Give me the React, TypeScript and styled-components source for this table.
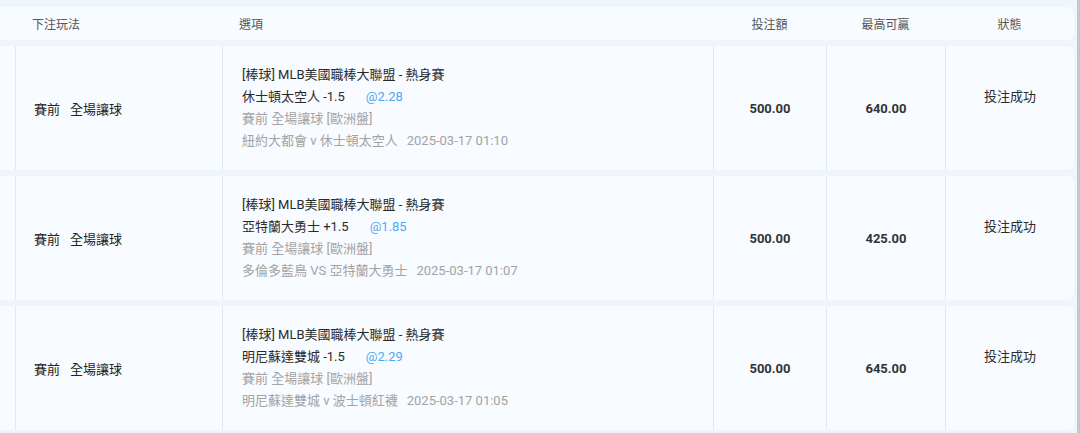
import React from "react";
import styled, { createGlobalStyle } from "styled-components";

const GlobalStyle = createGlobalStyle`
  html, body { margin: 0; padding: 0; }
  body {
    background: #eef5fd;
    font-family: Roboto, "Noto Sans CJK TC", "Noto Sans CJK SC", sans-serif;
    color: #333;
    overflow: hidden;
  }
`;

const COLS = "15px 207px 491px 113px 119px 129px";

const Page = styled.div`
  display: flex;
  width: 1080px;
  height: 433px;
  overflow: hidden;
`;

const Content = styled.div`
  flex: 1;
  padding: 7px 3px 0 0;
  display: flex;
  flex-direction: column;
  gap: 6px;
`;

const ScrollBar = styled.div`
  width: 3px;
  background: #c3c6cd;
`;

const HeaderRow = styled.div`
  display: grid;
  grid-template-columns: ${COLS};
  height: 33px;
  background: #f8fbff;
  border-radius: 0 7px 7px 0;
  align-items: center;
  font-size: 12px;
  color: #555;
`;

const HeadCell = styled.div<{ $align?: string }>`
  text-align: ${(p) => p.$align || "left"};
  padding-left: ${(p) => (p.$align === "center" ? "0" : "17px")};
`;

const Row = styled.div`
  display: grid;
  grid-template-columns: ${COLS};
  height: 124px;
  flex-shrink: 0;
  background: #f8fbff;
  border-radius: 0 7px 7px 0;
`;

const Cell = styled.div<{ $first?: boolean; $center?: boolean }>`
  border-left: ${(p) => (p.$first ? "none" : "1px solid #e2e8f0")};
  display: flex;
  align-items: center;
  justify-content: ${(p) => (p.$center ? "center" : "flex-start")};
  font-size: 13px;
`;

const PlayCell = styled(Cell)`
  padding-left: 18px;
  gap: 10px;
  color: #222;
`;

const OptionCell = styled(Cell)`
  padding-left: 19px;
`;

const OptionBlock = styled.div`
  display: flex;
  flex-direction: column;
  line-height: 22px;
  font-size: 13px;
`;

const Line = styled.div<{ $muted?: boolean }>`
  color: ${(p) => (p.$muted ? "#a3a3a3" : "#2a2a2a")};
  white-space: nowrap;
`;

const Odds = styled.span`
  color: #4fa8f3;
  margin-left: 21px;
`;

const Time = styled.span`
  margin-left: 9px;
`;

const Amount = styled(Cell)`
  font-weight: 700;
  color: #333;
`;

const StatusCell = styled(Cell)`
  align-items: flex-start;
  padding-top: 40px;
  line-height: 22px;
  color: #2a2a2a;
`;

type Bet = {
  team: string;
  odds: string;
  match: string;
  time: string;
  stake: string;
  win: string;
};

const bets: Bet[] = [
  {
    team: "休士頓太空人 -1.5",
    odds: "@2.28",
    match: "紐約大都會 v 休士頓太空人",
    time: "2025-03-17 01:10",
    stake: "500.00",
    win: "640.00",
  },
  {
    team: "亞特蘭大勇士 +1.5",
    odds: "@1.85",
    match: "多倫多藍鳥 VS 亞特蘭大勇士",
    time: "2025-03-17 01:07",
    stake: "500.00",
    win: "425.00",
  },
  {
    team: "明尼蘇達雙城 -1.5",
    odds: "@2.29",
    match: "明尼蘇達雙城 v 波士頓紅襪",
    time: "2025-03-17 01:05",
    stake: "500.00",
    win: "645.00",
  },
];

export default function App() {
  return (
    <>
      <GlobalStyle />
      <Page>
        <Content>
          <HeaderRow>
            <div />
            <HeadCell>下注玩法</HeadCell>
            <HeadCell>選項</HeadCell>
            <HeadCell $align="center">投注額</HeadCell>
            <HeadCell $align="center">最高可贏</HeadCell>
            <HeadCell $align="center">狀態</HeadCell>
          </HeaderRow>
          {bets.map((b, i) => (
            <Row key={i}>
              <Cell $first />
              <PlayCell>
                <span>賽前</span>
                <span>全場讓球</span>
              </PlayCell>
              <OptionCell>
                <OptionBlock>
                  <Line>[棒球] MLB美國職棒大聯盟 - 熱身賽</Line>
                  <Line>
                    {b.team}
                    <Odds>{b.odds}</Odds>
                  </Line>
                  <Line $muted>賽前 全場讓球 [歐洲盤]</Line>
                  <Line $muted>
                    {b.match}
                    <Time>{b.time}</Time>
                  </Line>
                </OptionBlock>
              </OptionCell>
              <Amount $center>{b.stake}</Amount>
              <Amount $center>{b.win}</Amount>
              <StatusCell $center>投注成功</StatusCell>
            </Row>
          ))}
        </Content>
        <ScrollBar />
      </Page>
    </>
  );
}
